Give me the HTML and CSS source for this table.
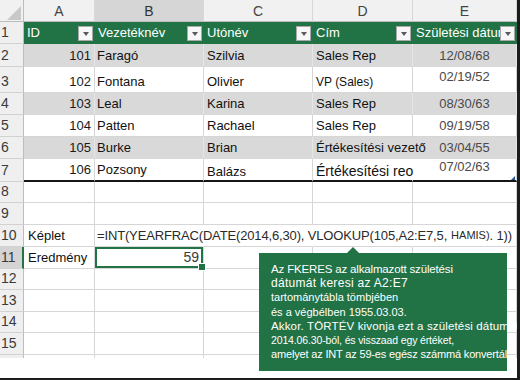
FILE: index.html
```html
<!DOCTYPE html>
<html lang="hu">
<head>
<meta charset="utf-8">
<title>FKERES példa</title>
<link rel="stylesheet" href="styles.css">
</head>
<body>
<div class="sheet">
  <div class="row hdr">
    <div class="c rh corner"><svg width="24" height="22" viewBox="0 0 24 22"><polygon points="21,6 21,20 7,20" fill="#c9c9c9"/></svg></div>
    <div class="c ca">A</div>
    <div class="c cb colsel">B</div>
    <div class="c cc">C</div>
    <div class="c cd">D</div>
    <div class="c ce">E</div>
  </div>
  <div class="row thead">
    <div class="c rh">1</div>
    <div class="c ca"><span class="tt">ID</span><span class="dd"></span></div>
    <div class="c cb"><span class="tt">Vezetéknév</span><span class="dd"></span></div>
    <div class="c cc"><span class="tt">Utónév</span><span class="dd"></span></div>
    <div class="c cd"><span class="tt">Cím</span><span class="dd"></span></div>
    <div class="c ce"><span class="tt">Születési dátum</span><span class="dd"></span></div>
  </div>
  <div class="row band r2">
    <div class="c rh">2</div>
    <div class="c ca num">101</div>
    <div class="c cb">Faragó</div>
    <div class="c cc">Szilvia</div>
    <div class="c cd">Sales Rep</div>
    <div class="c ce date">12/08/68</div>
  </div>
  <div class="row r3">
    <div class="c rh">3</div>
    <div class="c ca num">102</div>
    <div class="c cb">Fontana</div>
    <div class="c cc">Olivier</div>
    <div class="c cd small">VP (Sales)</div>
    <div class="c ce date raised">02/19/52</div>
  </div>
  <div class="row band">
    <div class="c rh">4</div>
    <div class="c ca num">103</div>
    <div class="c cb">Leal</div>
    <div class="c cc">Karina</div>
    <div class="c cd">Sales Rep</div>
    <div class="c ce date">08/30/63</div>
  </div>
  <div class="row">
    <div class="c rh">5</div>
    <div class="c ca num">104</div>
    <div class="c cb">Patten</div>
    <div class="c cc">Rachael</div>
    <div class="c cd">Sales Rep</div>
    <div class="c ce date">09/19/58</div>
  </div>
  <div class="row band">
    <div class="c rh">6</div>
    <div class="c ca num">105</div>
    <div class="c cb">Burke</div>
    <div class="c cc">Brian</div>
    <div class="c cd spill">Értékesítési vezető</div>
    <div class="c ce date">03/04/55</div>
  </div>
  <div class="row r7">
    <div class="c rh">7</div>
    <div class="c ca num">106</div>
    <div class="c cb">Pozsony</div>
    <div class="c cc low">Balázs</div>
    <div class="c cd spill big">Értékesítési reo</div>
    <div class="c ce date raised2"><span>07/02/63</span><span class="rz"></span></div>
  </div>
  <div class="row r8">
    <div class="c rh">8</div>
    <div class="c ca"></div><div class="c cb"></div><div class="c cc"></div><div class="c cd"></div><div class="c ce"></div>
  </div>
  <div class="row">
    <div class="c rh">9</div>
    <div class="c ca"></div><div class="c cb"></div><div class="c cc"></div><div class="c cd"></div><div class="c ce"></div>
  </div>
  <div class="row r10">
    <div class="c rh">10</div>
    <div class="c ca lbl">Képlet</div>
    <div class="c cb formula">=INT(YEARFRAC(DATE(2014,6,30), VLOOKUP(105,A2:E7,5, <span class="fsmall">HAMIS)</span>. 1))</div>
    <div class="c cc"></div><div class="c cd"></div><div class="c ce"></div>
  </div>
  <div class="row r11">
    <div class="c rh rowsel">11</div>
    <div class="c ca lbl">Eredmény</div>
    <div class="c cb num active">59</div>
    <div class="c cc"></div><div class="c cd"></div><div class="c ce"></div>
  </div>
  <div class="row r12">
    <div class="c rh">12</div>
    <div class="c ca"></div><div class="c cb"></div><div class="c cc"></div><div class="c cd"></div><div class="c ce"></div>
  </div>
  <div class="row">
    <div class="c rh">13</div>
    <div class="c ca"></div><div class="c cb"></div><div class="c cc"></div><div class="c cd"></div><div class="c ce"></div>
  </div>
  <div class="row r14">
    <div class="c rh">14</div>
    <div class="c ca"></div><div class="c cb"></div><div class="c cc"></div><div class="c cd"></div><div class="c ce"></div>
  </div>
  <div class="row">
    <div class="c rh">15</div>
    <div class="c ca"></div><div class="c cb"></div><div class="c cc"></div><div class="c cd"></div><div class="c ce"></div>
  </div>
  <div class="row r16">
    <div class="c rh"></div>
    <div class="c ca"></div><div class="c cb"></div><div class="c cc"></div><div class="c cd"></div><div class="c ce"></div>
  </div>

  <div class="callout">
    <span class="ln l1">Az FKERES az alkalmazott születési</span>
    <span class="ln l2">dátumát keresi az A2:E7</span>
    <span class="ln l3">tartománytábla tömbjében</span>
    <span class="ln l4">és a végbélben 1955.03.03.</span>
    <span class="ln l5">Akkor. TÖRTÉV kivonja ezt a születési dátumot</span>
    <span class="ln l6">2014.06.30-ból, és visszaad egy értéket,</span>
    <span class="ln l7">amelyet az INT az 59-es egész számmá konvertál.</span>
  </div>
</div>
</body>
</html>
```

FILE: styles.css
```css
* { box-sizing: border-box; }

body {
  margin: 0;
  background: #fff;
}

.sheet {
  position: relative;
  width: 520px;
  height: 380px;
  overflow: hidden;
  background: #fff;
  border-right: 3px solid #1c1c1c;
  border-bottom: 2px solid #1c1c1c;
  font-family: "Liberation Sans", Arial, sans-serif;
  font-size: 13px;
  color: #111;
}

.row {
  display: flex;
  height: 22px;
}

.c {
  flex: none;
  display: flex;
  align-items: flex-end;
  padding: 0 3px 3px 3px;
  border-right: 1px solid #d6d6d6;
  border-bottom: 1px solid #d6d6d6;
  white-space: nowrap;
  overflow: hidden;
  line-height: 15px;
}

.ca { width: 71px; padding-left: 4px; }
.cb { width: 109px; padding-left: 2px; }
.cc { width: 109px; }
.cd { width: 100px; }
.ce { width: 104px; }

.rh {
  width: 24px;
  background: #efefef;
  border-right-color: #bdbdbd;
  border-bottom-color: #d2d2d2;
  padding: 0 0 3px 1px;
  font-size: 14px;
  color: #3a3a3a;
}

/* column header row */
.hdr .c {
  background: #f1f1f1;
  justify-content: center;
  align-items: center;
  padding: 2px 0 0 0;
  color: #444;
  font-size: 14px;
  border-bottom-color: #bdbdbd;
  border-right-color: #d8d8d8;
}
.hdr .corner {
  padding: 0;
  display: block;
  border-right-color: #bdbdbd;
}
.hdr .corner svg { display: block; }
.hdr .colsel {
  background: #d6d6d6;
  color: #333;
}

/* table header row */
.thead .c:not(.rh) {
  background: #217346;
  color: #fff;
  border-right-color: #217346;
  border-bottom-color: #217346;
  padding: 0 1px 2px 3px;
}
.thead .ca { padding-left: 4px; }
.tt {
  flex: 1;
  min-width: 0;
  overflow: hidden;
  padding-bottom: 1px;
}
.dd {
  flex: none;
  width: 15px;
  height: 15px;
  background: #f7f7f7;
  border: 1px solid #a9a9a9;
  display: flex;
  align-items: center;
  justify-content: center;
}
.dd::after {
  content: "";
  border-left: 3.5px solid transparent;
  border-right: 3.5px solid transparent;
  border-top: 4px solid #5a5a5a;
}

/* data rows */
.r2 { height: 23px; }
.r3 { height: 26px; }
.band { background: #d9d9d9; }
.band .c:not(.rh) {
  border-right-color: #e6e6e6;
  border-bottom-color: #d9d9d9;
}
.num {
  justify-content: flex-end;
  color: #1a1a1a;
}
.date {
  justify-content: center;
  color: #4a4a4a;
}
.small { font-size: 12px; padding-bottom: 2px; }
.raised { padding-bottom: 8px; }
.raised2 { padding-bottom: 6px; position: relative; overflow: visible; }
.low { padding-bottom: 1px; }
.big { font-size: 14px; padding-bottom: 1px; }
.spill {
  overflow: visible;
  border-right-color: transparent !important;
}

.r7 { height: 23px; }
.r7 .c:not(.rh) { border-bottom: 2px solid #161616; }
.rz {
  position: absolute;
  right: 1px;
  bottom: 0;
  width: 0;
  height: 0;
  border-left: 4px solid transparent;
  border-bottom: 4px solid #2b579a;
}

.r8 { height: 21px; }
.r12 { height: 21px; }
.r14 { height: 21px; }
.r16 { height: 3px; }
.r16 .c { border-bottom: none; }

/* formula row */
.lbl { color: #111; }
.r10 .cb, .r10 .cc, .r10 .cd { border-right-color: transparent; }
.formula {
  overflow: visible;
  color: #2a2a2a;
  letter-spacing: -0.15px;
}
.fsmall {
  font-size: 11px;
  letter-spacing: 0;
  margin-left: 4px;
}

/* selection */
.rowsel {
  background: #d4d4d4;
  border-right: 2px solid #217346;
  color: #3a3a3a;
}
.active {
  position: relative;
  overflow: visible;
  box-shadow: inset 0 0 0 2px #217346;
  color: #3a3a3a;
  padding-right: 4px;
  font-size: 14px;
}
.active::after {
  content: "";
  position: absolute;
  right: -3px;
  bottom: -3px;
  width: 6px;
  height: 6px;
  background: #217346;
  border: 1px solid #fff;
}

/* callout */
.callout {
  position: absolute;
  left: 259px;
  top: 253px;
  width: 248px;
  height: 118px;
  background: #217346;
  color: #fff;
  font-size: 11.5px;
  line-height: 14.2px;
  padding: 9px 0 0 12px;
  white-space: nowrap;
}
.callout::before {
  content: "";
  position: absolute;
  left: 88px;
  top: -6px;
  border-left: 6px solid transparent;
  border-right: 6px solid transparent;
  border-bottom: 6px solid #217346;
}
.ln { display: block; }
.l1 { letter-spacing: -0.16px; }
.l2 { font-size: 12px; letter-spacing: 0.3px; }
.l3 { font-size: 11px; }
.l4 { font-size: 11px; }
.l5 { letter-spacing: 0.15px; }
.l6 { font-size: 10.5px; letter-spacing: -0.14px; }
.l7 { font-size: 11px; letter-spacing: -0.17px; }
```
